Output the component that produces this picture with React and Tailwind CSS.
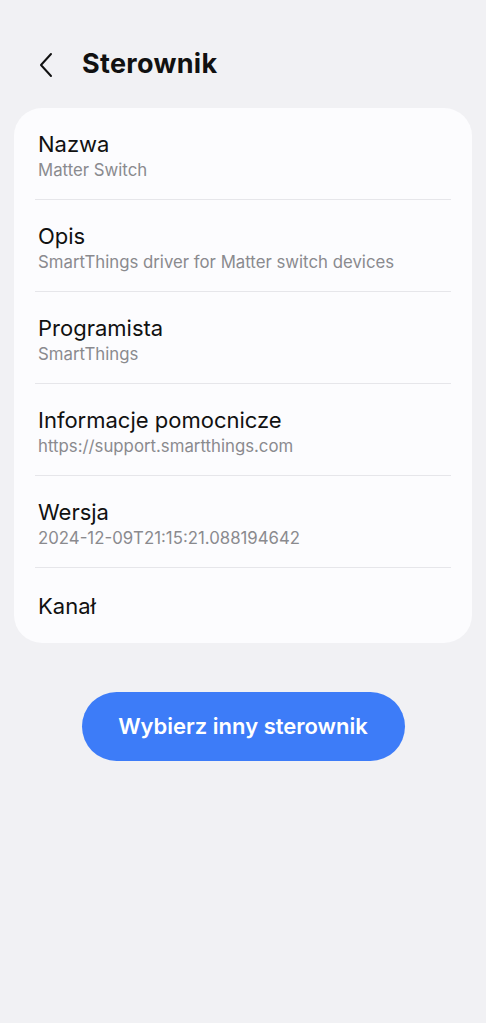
const rows = [
  { label: 'Nazwa', value: 'Matter Switch' },
  { label: 'Opis', value: 'SmartThings driver for Matter switch devices' },
  { label: 'Programista', value: 'SmartThings' },
  { label: 'Informacje pomocnicze', value: 'https://support.smartthings.com' },
  { label: 'Wersja', value: '2024-12-09T21:15:21.088194642' },
  { label: 'Kanał' },
]

function BackIcon() {
  return (
    <svg width="16" height="26" viewBox="0 0 16 26" fill="none">
      <path d="M13 2 L3 13 L13 24" stroke="#111" strokeWidth="2" strokeLinecap="round" strokeLinejoin="round" />
    </svg>
  )
}

export default function App() {
  return (
    <div
      className="min-h-[1023px] bg-[#f1f1f4] flex flex-col"
      style={{ fontFamily: 'Inter, "Noto Sans", sans-serif' }}
    >
      <header className="flex items-center h-[65px] mt-[32px] pl-[38px]">
        <BackIcon />
        <h1 className="ml-[28px] text-[27px] font-bold text-[#111] tracking-[0.3px]">Sterownik</h1>
      </header>

      <section className="mx-[14px] mt-[11px] bg-[#fcfcfe] rounded-[28px] px-[21px]">
        {rows.map((row) => (
          <div
            key={row.label}
            className={
              row.value
                ? 'h-[92px] flex flex-col justify-center pl-[3px] pt-[3px] border-b border-[#e6e6ea]'
                : 'h-[75px] flex flex-col justify-center pl-[3px]'
            }
          >
            <div className="text-[22px] leading-[28px] text-[#111]">{row.label}</div>
            {row.value && (
              <div className="text-[16.8px] leading-[22px] text-[#8a8a8e] mt-[1px]">{row.value}</div>
            )}
          </div>
        ))}
      </section>

      <div className="flex justify-center mt-[49px]">
        <button className="w-[323px] h-[69px] rounded-full bg-[#3d7cf8] text-white text-[22px] font-semibold">
          Wybierz inny sterownik
        </button>
      </div>
    </div>
  )
}
